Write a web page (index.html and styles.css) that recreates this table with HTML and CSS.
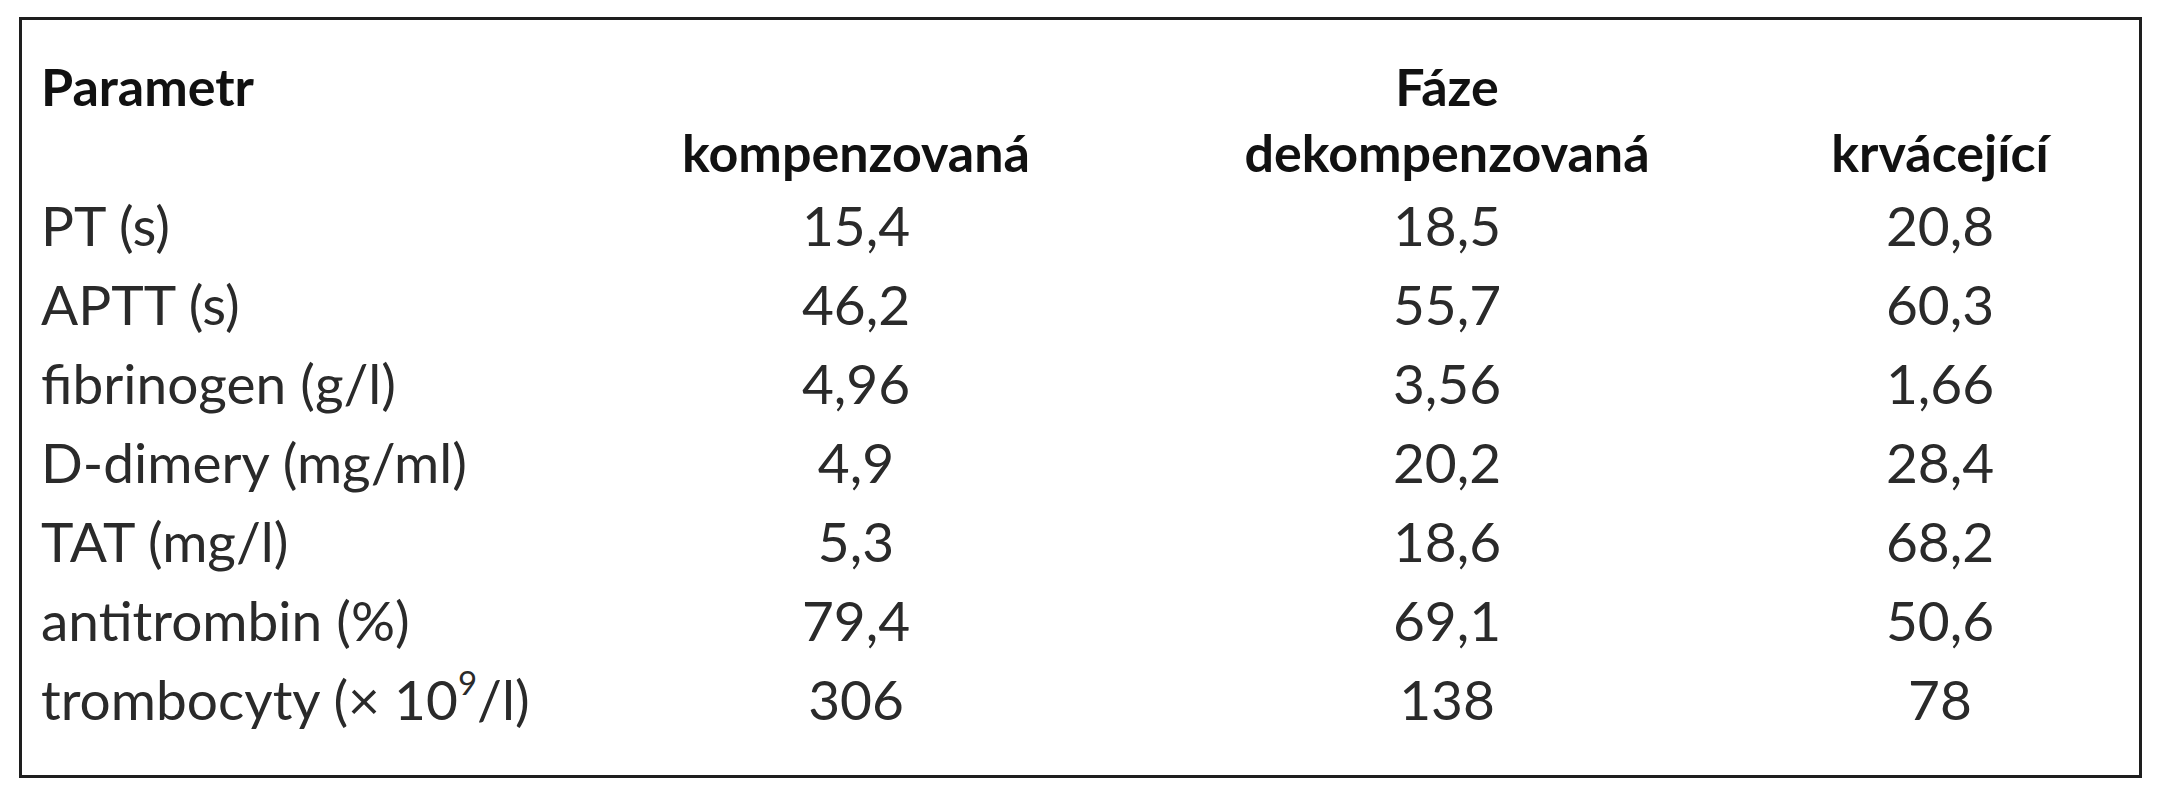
FILE: index.html
```
<!DOCTYPE html>
<html lang="cs">
<head>
<meta charset="utf-8">
<title>Fáze</title>
<link rel="stylesheet" href="styles.css">
</head>
<body>
<div class="frame">
  <div class="grid">
    <div class="hd"><span>Parametr</span></div>
    <div class="hd"></div>
    <div class="hd c"><span>Fáze</span></div>
    <div class="hd"></div>

    <div class="hd"></div>
    <div class="hd c"><span>kompenzovaná</span></div>
    <div class="hd c"><span>dekompenzovaná</span></div>
    <div class="hd c"><span>krvácející</span></div>

    <div class="cell"><span>PT (s)</span></div><div class="cell c">15,4</div><div class="cell c">18,5</div><div class="cell c">20,8</div>
    <div class="cell"><span>APTT (s)</span></div><div class="cell c">46,2</div><div class="cell c">55,7</div><div class="cell c">60,3</div>
    <div class="cell"><span>fibrinogen (g/l)</span></div><div class="cell c">4,96</div><div class="cell c">3,56</div><div class="cell c">1,66</div>
    <div class="cell"><span>D-dimery (mg/ml)</span></div><div class="cell c">4,9</div><div class="cell c">20,2</div><div class="cell c">28,4</div>
    <div class="cell"><span>TAT (mg/l)</span></div><div class="cell c">5,3</div><div class="cell c">18,6</div><div class="cell c">68,2</div>
    <div class="cell"><span>antitrombin (%)</span></div><div class="cell c">79,4</div><div class="cell c">69,1</div><div class="cell c">50,6</div>
    <div class="cell"><span>trombocyty (× 10<sup class="exp">9</sup>/l)</span></div><div class="cell c">306</div><div class="cell c">138</div><div class="cell c">78</div>
  </div>
</div>
</body>
</html>
```
FILE: styles.css
```
html, body {
  margin: 0;
  padding: 0;
  background: #ffffff;
}
body {
  width: 2166px;
  height: 800px;
  font-family: Lato, "Open Sans", "Liberation Sans", sans-serif;
  color: #2a2a2a;
}
.frame {
  margin: 17px 0 0 19px;
  width: 2117px;
  height: 755px;
  border: 3px solid #1e1e1e;
}
.grid {
  display: grid;
  grid-template-columns: 555px 520px 662px 324px;
  grid-template-rows: 66px 66px repeat(7, 79px);
  padding: 33px 0 0 19px;
  font-size: 55px;
}
.hd, .cell {
  display: flex;
  align-items: center;
  white-space: nowrap;
}
.hd {
  font-weight: 700;
  font-size: 52px;
  color: #111111;
}
.c {
  justify-content: center;
}
.exp {
  font-size: 0.6em;
  vertical-align: 0.75em;
  line-height: 0;
}
```
